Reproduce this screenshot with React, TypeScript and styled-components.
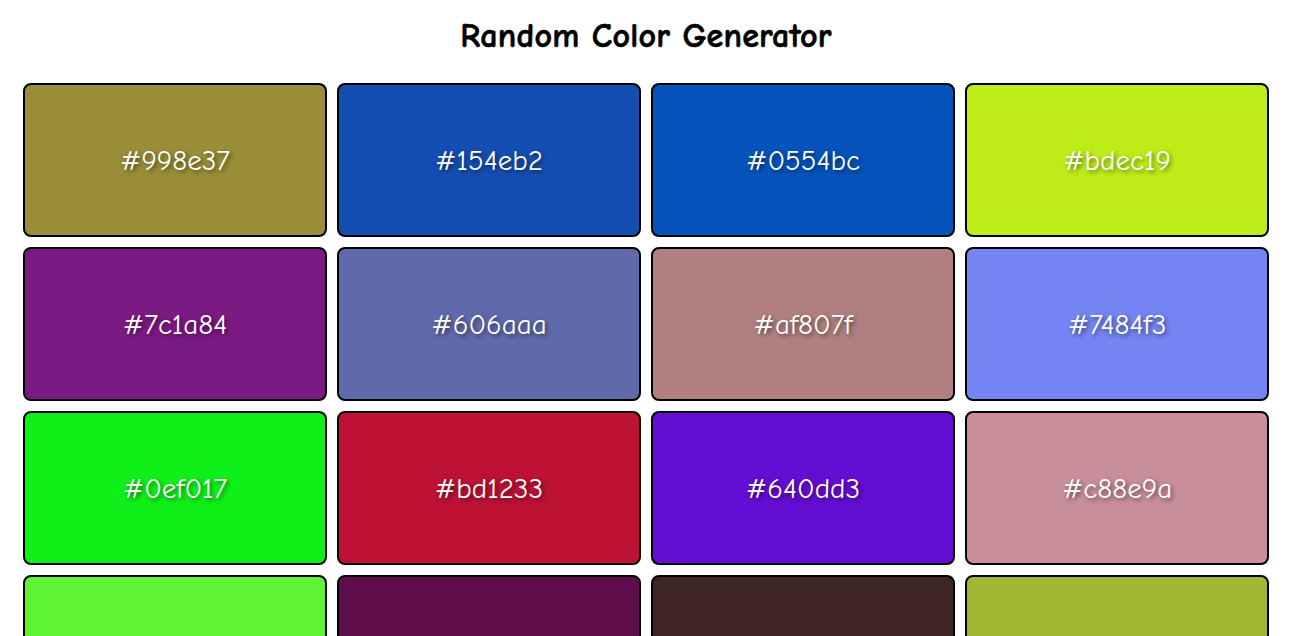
import React from "react";
import styled, { createGlobalStyle } from "styled-components";

const GlobalStyle = createGlobalStyle`
  html, body { margin: 0; padding: 0; background: #ffffff; }
  body { font-family: "Comic Sans MS", "Comic Neue", "Open Sans", sans-serif; }
`;

const Page = styled.div`
  padding: 0 23px;
  display: flex;
  flex-direction: column;
  align-items: stretch;
`;

const Title = styled.h1`
  margin: 0;
  height: 83px;
  display: flex;
  align-items: center;
  justify-content: center;
  padding-bottom: 12px;
  box-sizing: border-box;
  font-size: 34px;
  font-weight: 900;
  color: #000;
  letter-spacing: 0.2px;
  -webkit-text-stroke: 0.6px #000;
`;

const Grid = styled.div`
  display: grid;
  grid-template-columns: repeat(4, 1fr);
  gap: 10px;
`;

const Card = styled.div<{ $bg: string }>`
  height: 154px;
  box-sizing: border-box;
  border: 2px solid #000;
  border-radius: 8px;
  background: ${(p) => p.$bg};
  display: flex;
  align-items: center;
  justify-content: center;
  color: #fff;
  font-size: 29px;
  text-shadow: 2px 2px 4px rgba(0, 0, 0, 0.5);
`;

const colors: { bg: string; label?: string }[] = [
  { bg: "#998e37", label: "#998e37" },
  { bg: "#154eb2", label: "#154eb2" },
  { bg: "#0554bc", label: "#0554bc" },
  { bg: "#bdec19", label: "#bdec19" },
  { bg: "#7c1a84", label: "#7c1a84" },
  { bg: "#606aaa", label: "#606aaa" },
  { bg: "#af807f", label: "#af807f" },
  { bg: "#7484f3", label: "#7484f3" },
  { bg: "#0ef017", label: "#0ef017" },
  { bg: "#bd1233", label: "#bd1233" },
  { bg: "#640dd3", label: "#640dd3" },
  { bg: "#c88e9a", label: "#c88e9a" },
  { bg: "#5ef433", label: "#5ef433" },
  { bg: "#5e0d4a", label: "#5e0d4a" },
  { bg: "#3d2624", label: "#3d2624" },
  { bg: "#a2b633", label: "#a2b633" },
];

export default function App() {
  return (
    <>
      <GlobalStyle />
      <Page>
        <Title>Random Color Generator</Title>
        <Grid>
          {colors.map((c, i) => (
            <Card key={i} $bg={c.bg}>
              {c.label}
            </Card>
          ))}
        </Grid>
      </Page>
    </>
  );
}
